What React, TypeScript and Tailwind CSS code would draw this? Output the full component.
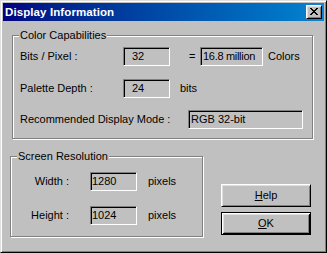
const FONT = "font-['Liberation_Sans',Arial,sans-serif]";

const field =
  "flex h-[19px] items-center border border-t-[#808080] border-l-[#808080] border-b-white border-r-white bg-[#c0c0c0] shadow-[inset_1px_1px_0_#000] text-black";

function Field({ value, className }: { value: string; className: string }) {
  return <div className={`${field} ${className}`}>{value}</div>;
}

function CloseGlyph() {
  const rows = ["11000011", "01100110", "00111100", "00011000", "00111100", "01100110", "11000011"];
  return (
    <svg width="8" height="7" viewBox="0 0 8 7" shapeRendering="crispEdges">
      {rows.map((r, y) =>
        r.split("").map((c, x) => (c === "1" ? <rect key={`${x}-${y}`} x={x} y={y} width="1" height="1" fill="#000" /> : null))
      )}
    </svg>
  );
}

function Group({ label, className, children }: { label: string; className: string; children: React.ReactNode }) {
  return (
    <div className={`relative border border-[#808080] shadow-[inset_1px_1px_0_#fff,1px_1px_0_#fff] ${className}`}>
      <span className="absolute -top-[7px] left-[6px] bg-[#c0c0c0] px-px leading-[13px]">{label}</span>
      {children}
    </div>
  );
}

export default function App() {
  return (
    <div
      className={`${FONT} h-[253px] w-[327px] border border-t-[#dfdfdf] border-l-[#dfdfdf] border-b-black border-r-black bg-[#c0c0c0] p-[2px] text-[11px] leading-[13px] text-black shadow-[inset_1px_1px_0_#fff,inset_-1px_-1px_0_#808080]`}
    >
      {/* title bar */}
      <div className="flex h-[18px] items-center justify-between bg-gradient-to-r from-[#000080] to-[#1084d0] pl-[2px] pr-[2px]">
        <span className="text-[11.5px] font-bold tracking-[0.1px] text-white">Display Information</span>
        <button className="flex h-[14px] w-[16px] items-center justify-center border border-t-white border-l-white border-b-black border-r-black bg-[#c0c0c0] pb-px pr-px shadow-[inset_1px_1px_0_#dfdfdf,inset_-1px_-1px_0_#808080]">
          <CloseGlyph />
        </button>
      </div>

      <div className="pl-[9px] pr-[10px] pt-[14px]">
        <Group label="Color Capabilities" className="h-[104px] w-[301px] pl-[7px] pt-[11px]">
          <div className="flex h-[19px] items-center">
            <span className="w-[103px]">Bits / Pixel :</span>
            <Field value="32" className="w-[47px] pl-[8px]" />
            <span className="ml-[19px] w-[11px]">=</span>
            <Field value="16.8 million" className="w-[63px] pl-[2px] tracking-[-0.3px]" />
            <span className="ml-[5px]">Colors</span>
          </div>
          <div className="mt-[13px] flex h-[19px] items-center">
            <span className="w-[103px]">Palette Depth :</span>
            <Field value="24" className="w-[47px] pl-[8px]" />
            <span className="ml-[10px]">bits</span>
          </div>
          <div className="mt-[12px] flex h-[19px] items-center">
            <span className="w-[168px]">Recommended Display Mode :</span>
            <Field value="RGB 32-bit" className="w-[115px] pl-[2px]" />
          </div>
        </Group>

        <div className="mt-[17px] flex">
          <Group label="Screen Resolution" className="ml-[-2px] h-[81px] w-[193px] pt-[15px]">
            <div className="flex h-[19px] items-center">
              <span className="w-[58px] text-right">Width :</span>
              <Field value="1280" className="ml-[21px] w-[47px] pl-[1px]" />
              <span className="ml-[11px]">pixels</span>
            </div>
            <div className="mt-[15px] flex h-[19px] items-center">
              <span className="w-[58px] text-right">Height :</span>
              <Field value="1024" className="ml-[21px] w-[47px] pl-[1px]" />
              <span className="ml-[11px]">pixels</span>
            </div>
          </Group>

          <div className="ml-[18px] flex flex-col gap-[5px] pt-[28px]">
            <button className="h-[23px] w-[90px] border border-t-white border-l-white border-b-black border-r-black bg-[#c0c0c0] shadow-[inset_1px_1px_0_#dfdfdf,inset_-1px_-1px_0_#808080]">
              <span className="underline underline-offset-[1px]">H</span>elp
            </button>
            <button className="h-[23px] w-[90px] border border-black bg-[#c0c0c0] shadow-[inset_1px_1px_0_#fff,inset_-1px_-1px_0_#000,inset_2px_2px_0_#dfdfdf,inset_-2px_-2px_0_#808080]">
              <span className="underline underline-offset-[1px]">O</span>K
            </button>
          </div>
        </div>
      </div>
    </div>
  );
}
